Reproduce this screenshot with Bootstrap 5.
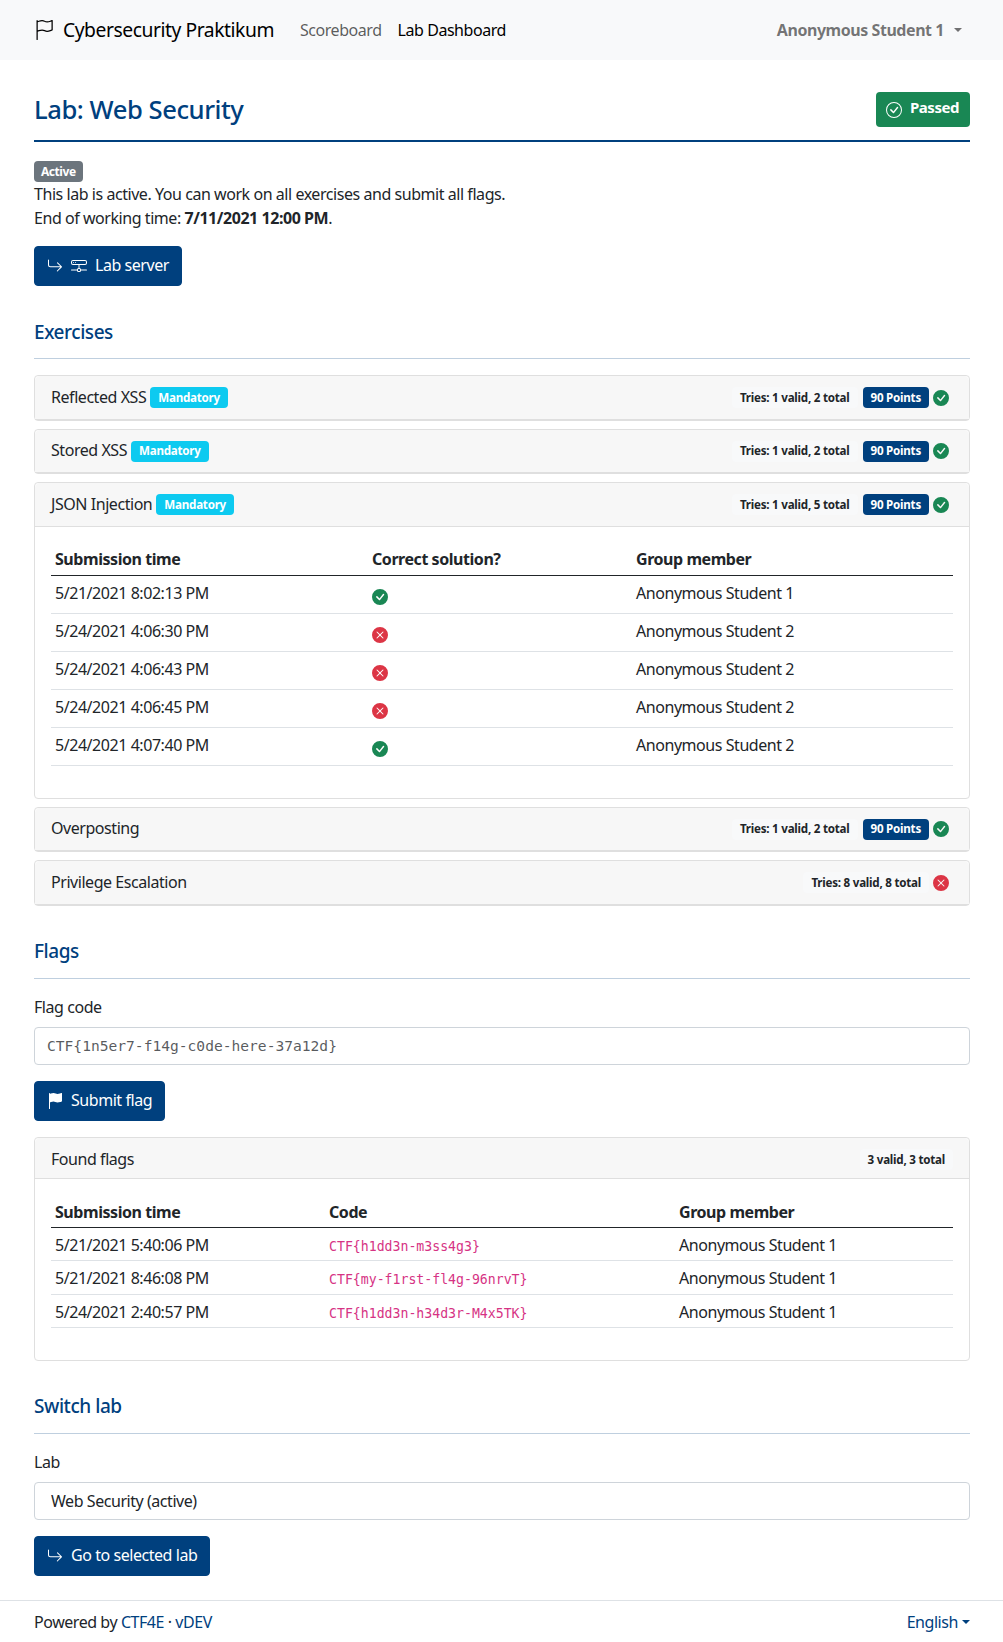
<!DOCTYPE html>
<html lang="en">
<head>
  <meta charset="UTF-8" />
  <title>Lab Dashboard</title>
  <link href="https://cdn.jsdelivr.net/npm/bootstrap@5.3.0/dist/css/bootstrap.min.css" rel="stylesheet"/>
  <style>
    body { font-family: "Noto Sans", sans-serif; color: #212529; letter-spacing: -.028em; }
    a { color: #00407e; text-decoration: none; }
    .ico { width: 1em; height: 1em; fill: currentColor; vertical-align: -.125em; flex: none; }
    .top-bar { height: 60px; padding: 0 33px 0 34px; }
    .top-bar .navbar-brand { font-size: 19.3px; margin-right: 18px; padding: 0; display: flex; align-items: center; gap: 9px; }
    .top-bar .navbar-brand .ico { width: 20px; height: 20px; }
    .top-bar .nav-link { padding: 8px; }
    .user-menu { font-weight: 700; color: rgba(0,0,0,.55); padding-right: 8px; }
    .user-menu::after { margin-left: 10px; }
    .page-wrap { padding: 0 33px 0 34px; }
    .lab-title { border-bottom: 2px solid #00407e; height: 82px; padding-top: 31px; display: flex; justify-content: space-between; align-items: flex-start; }
    .lab-title h1 { color: #00407e; font-size: 25.6px; margin: 0; line-height: 38px; }
    .passed-tag { background: #198754; color: #fff; font-weight: 700; font-size: 15px; border-radius: 4px; height: 35px; margin-top: 1px; padding: 0 11px 5px 10px; display: flex; align-items: center; gap: 8px; }
    .passed-tag .ico { font-size: 16px; margin-top: 5px; }
    .state-tag { font-size: 12px; height: 21px; padding: 0 7px; line-height: 21px; display: block; width: fit-content; margin-top: 19px; border-radius: 4px; }
    .dark-btn { --bs-btn-bg: #00407e; --bs-btn-border-color: #00407e; --bs-btn-hover-bg: #00407e; --bs-btn-hover-border-color: #00407e; --bs-btn-color: #fff; --bs-btn-hover-color: #fff; height: 40px; padding: 0 12px 2px; display: inline-flex; align-items: center; gap: 8px; letter-spacing: inherit; border-radius: 4px; }
    .dark-btn .ico { margin-top: 2px; }
    .sec-head { color: #00407e; font-size: 19px; line-height: 30px; margin: 30px 0 0; padding-bottom: 12px; border-bottom: 1px solid #bfcfdf; }
    .sec-first { margin-top: 31px; padding-bottom: 11px; }
    .ex-card { border-color: #dfdfdf; margin-bottom: 8px; border-radius: 4px; }
    .ex-card .card-header { background: #f7f7f7; padding: 0 16px 1px; height: 43.5px; display: flex; align-items: center; border-color: #dfdfdf; }
    .ex-card .found-head { height: 41.5px; padding-bottom: 0; padding-top: 2px; }
    .ex-body { padding-bottom: 16px; }
    .tag { font-size: 11.6px; line-height: 12px; padding: 4.5px 8px; border-radius: 4px; margin-left: 4px; margin-top: 2px; letter-spacing: -.02em; }
    .tag-blue { background: #0dcaf0; color: #fff; }
    .tag-dark { background: #00407e; color: #fff; margin-left: 5px; }
    .tag-tries { background: #f8f9fa; color: #212529; }
    .stat-ico { font-size: 16px; margin: 2px 4px 0; }
    .ok { color: #198754; }
    .bad { color: #dc3545; }
    .data-tbl { table-layout: fixed; }
    .data-tbl th, .data-tbl td { padding: 4px; border-color: #dee2e6; }
    .data-tbl td { padding-top: 5px; padding-bottom: 3px; vertical-align: top; }
    .data-tbl thead th { border-bottom: 1px solid #212529; padding-bottom: 4px; height: 32px; vertical-align: bottom; }
    .data-tbl.tight thead th { padding-bottom: 3px; }
    .data-tbl tbody tr { height: 38px; }
    .data-tbl.tight tbody tr { height: 33.5px; }
    .data-tbl td .ico { font-size: 16px; margin-top: 8px; display: block; }
    .c1 { width: 317px; }
    .c2 { width: 264px; }
    .d1 { width: 274px; }
    .d2 { width: 350px; }
    .mono-txt { font-family: "DejaVu Sans Mono", monospace; font-size: 13.2px; color: #d63384; letter-spacing: 0; }
    .field-lbl { margin: 16px 0 8px; display: block; }
    .flag-input { font-family: "DejaVu Sans Mono", monospace; font-size: 14.6px; letter-spacing: 0; height: 38px; border-radius: 4px; border-color: #ced4da; }
    .lab-select { height: 38px; border-radius: 4px; padding-left: 16px; background-image: none; letter-spacing: inherit; border-color: #ced4da; }
    .foot-bar { margin-top: 24px; border-top: 1px solid #dee2e6; padding: 9px 33px 0 34px; display: flex; justify-content: space-between; }
  </style>
</head>
<body>
  <svg width="0" height="0" class="position-absolute">
    <symbol id="i-flag" viewBox="0 0 16 16"><path d="M14.778.085A.5.5 0 0 1 15 .5V8a.5.5 0 0 1-.314.464L14.5 8l.186.464-.003.001-.006.003-.023.009a12.435 12.435 0 0 1-.397.15c-.264.095-.631.223-1.047.35-.816.252-1.879.523-2.71.523-.847 0-1.548-.28-2.158-.525l-.028-.01C7.68 8.71 7.14 8.5 6.5 8.5c-.7 0-1.638.23-2.437.477A19.626 19.626 0 0 0 3 9.342V15.5a.5.5 0 0 1-1 0V.5a.5.5 0 0 1 1 0v.282c.226-.079.496-.17.79-.26C4.606.272 5.67 0 6.5 0c.84 0 1.524.277 2.121.519l.043.018C9.286.788 9.828 1 10.5 1c.7 0 1.638-.23 2.437-.477a19.587 19.587 0 0 0 1.349-.476l.019-.007.004-.002h.001M14 1.221c-.22.078-.48.167-.766.255-.81.252-1.872.523-2.734.523-.886 0-1.592-.286-2.203-.534l-.008-.003C7.662 1.21 7.139 1 6.5 1c-.669 0-1.606.229-2.415.478A21.294 21.294 0 0 0 3 1.845v6.433c.22-.078.48-.167.766-.255C4.576 7.77 5.638 7.5 6.5 7.5c.847 0 1.548.28 2.158.525l.028.01C9.32 8.29 9.86 8.5 10.5 8.5c.668 0 1.606-.229 2.415-.478A21.317 21.317 0 0 0 14 7.655V1.222z"/></symbol>
    <symbol id="i-flag-fill" viewBox="0 0 16 16"><path d="M14.778.085A.5.5 0 0 1 15 .5V8a.5.5 0 0 1-.314.464L14.5 8l.186.464-.003.001-.006.003-.023.009a12.435 12.435 0 0 1-.397.15c-.264.095-.631.223-1.047.35-.816.252-1.879.523-2.71.523-.847 0-1.548-.28-2.158-.525l-.028-.01C7.68 8.71 7.14 8.5 6.5 8.5c-.7 0-1.638.23-2.437.477A19.626 19.626 0 0 0 3 9.342V15.5a.5.5 0 0 1-1 0V.5a.5.5 0 0 1 1 0v.282c.226-.079.496-.17.79-.26C4.606.272 5.67 0 6.5 0c.84 0 1.524.277 2.121.519l.043.018C9.286.788 9.828 1 10.5 1c.7 0 1.638-.23 2.437-.477a19.587 19.587 0 0 0 1.349-.476l.019-.007.004-.002h.001"/></symbol>
    <symbol id="i-check" viewBox="0 0 16 16"><path d="M8 15A7 7 0 1 1 8 1a7 7 0 0 1 0 14m0 1A8 8 0 1 0 8 0a8 8 0 0 0 0 16"/><path d="M10.97 4.97a.235.235 0 0 0-.02.022L7.477 9.417 5.384 7.323a.75.75 0 0 0-1.06 1.06L6.97 11.03a.75.75 0 0 0 1.079-.02l3.992-4.99a.75.75 0 0 0-1.071-1.05"/></symbol>
    <symbol id="i-ok" viewBox="0 0 16 16"><path d="M16 8A8 8 0 1 1 0 8a8 8 0 0 1 16 0m-3.97-3.03a.75.75 0 0 0-1.08.022L7.477 9.417 5.384 7.323a.75.75 0 0 0-1.06 1.06L6.97 11.03a.75.75 0 0 0 1.079-.02l3.992-4.99a.75.75 0 0 0-.01-1.05z"/></symbol>
    <symbol id="i-bad" viewBox="0 0 16 16"><path d="M16 8A8 8 0 1 1 0 8a8 8 0 0 1 16 0M5.354 4.646a.5.5 0 1 0-.708.708L7.293 8l-2.647 2.646a.5.5 0 0 0 .708.708L8 8.707l2.646 2.647a.5.5 0 0 0 .708-.708L8.707 8l2.647-2.646a.5.5 0 0 0-.708-.708L8 7.293z"/></symbol>
    <symbol id="i-return" viewBox="0 0 16 16"><path fill-rule="evenodd" d="M1.5 1.5A.5.5 0 0 0 1 2v4.8a2.5 2.5 0 0 0 2.5 2.5h9.793l-3.347 3.346a.5.5 0 0 0 .708.708l4.2-4.2a.5.5 0 0 0 0-.708l-4-4a.5.5 0 0 0-.708.708L13.293 8.3H3.5A1.5 1.5 0 0 1 2 6.8V2a.5.5 0 0 0-.5-.5"/></symbol>
    <symbol id="i-server" viewBox="0 0 16 16"><path d="M4.5 5a.5.5 0 1 0 0-1 .5.5 0 0 0 0 1zM3 4.5a.5.5 0 1 1-1 0 .5.5 0 0 1 1 0z"/><path d="M0 4a2 2 0 0 1 2-2h12a2 2 0 0 1 2 2v1a2 2 0 0 1-2 2H8.5v3a1.5 1.5 0 0 1 1.5 1.5h5.5a.5.5 0 0 1 0 1H10A1.5 1.5 0 0 1 8.5 14h-1A1.5 1.5 0 0 1 6 12.5H.5a.5.5 0 0 1 0-1H6A1.5 1.5 0 0 1 7.5 10V7H2a2 2 0 0 1-2-2V4zm1 0v1a1 1 0 0 0 1 1h12a1 1 0 0 0 1-1V4a1 1 0 0 0-1-1H2a1 1 0 0 0-1 1zm6 7.5v1a.5.5 0 0 0 .5.5h1a.5.5 0 0 0 .5-.5v-1a.5.5 0 0 0-.5-.5h-1a.5.5 0 0 0-.5.5z"/></symbol>
  </svg>

  <nav class="navbar navbar-expand navbar-light bg-light top-bar">
    <a class="navbar-brand" href="#"><svg class="ico"><use href="#i-flag"/></svg>Cybersecurity Praktikum</a>
    <ul class="navbar-nav me-auto">
      <li class="nav-item"><a class="nav-link" href="#">Scoreboard</a></li>
      <li class="nav-item"><a class="nav-link active" href="#">Lab Dashboard</a></li>
    </ul>
    <a class="nav-link dropdown-toggle user-menu" href="#">Anonymous Student 1</a>
  </nav>

  <main class="page-wrap">
    <div class="lab-title">
      <h1>Lab: Web Security</h1>
      <div class="passed-tag"><svg class="ico"><use href="#i-check"/></svg>Passed</div>
    </div>

    <span class="badge bg-secondary state-tag">Active</span>
    <div>This lab is active. You can work on all exercises and submit all flags.</div>
    <div>End of working time: <strong>7/11/2021 12:00 PM</strong>.</div>
    <a href="#" class="btn dark-btn mt-3"><svg class="ico"><use href="#i-return"/></svg><svg class="ico"><use href="#i-server"/></svg>Lab server</a>

    <h2 class="sec-head sec-first">Exercises</h2>

    <div class="card ex-card mt-3">
      <div class="card-header">Reflected XSS <span class="badge tag tag-blue">Mandatory</span>
        <span class="ms-auto badge tag tag-tries">Tries: 1 valid, 2 total</span><span class="badge tag tag-dark">90 Points</span><svg class="ico stat-ico ok"><use href="#i-ok"/></svg></div>
    </div>
    <div class="card ex-card">
      <div class="card-header">Stored XSS <span class="badge tag tag-blue">Mandatory</span>
        <span class="ms-auto badge tag tag-tries">Tries: 1 valid, 2 total</span><span class="badge tag tag-dark">90 Points</span><svg class="ico stat-ico ok"><use href="#i-ok"/></svg></div>
    </div>
    <div class="card ex-card">
      <div class="card-header">JSON Injection <span class="badge tag tag-blue">Mandatory</span>
        <span class="ms-auto badge tag tag-tries">Tries: 1 valid, 5 total</span><span class="badge tag tag-dark">90 Points</span><svg class="ico stat-ico ok"><use href="#i-ok"/></svg></div>
      <div class="card-body ex-body">
        <table class="table data-tbl">
          <colgroup><col class="c1"><col class="c2"><col></colgroup>
          <thead><tr><th>Submission time</th><th>Correct solution?</th><th>Group member</th></tr></thead>
          <tbody>
            <tr><td>5/21/2021 8:02:13 PM</td><td><svg class="ico ok"><use href="#i-ok"/></svg></td><td>Anonymous Student 1</td></tr>
            <tr><td>5/24/2021 4:06:30 PM</td><td><svg class="ico bad"><use href="#i-bad"/></svg></td><td>Anonymous Student 2</td></tr>
            <tr><td>5/24/2021 4:06:43 PM</td><td><svg class="ico bad"><use href="#i-bad"/></svg></td><td>Anonymous Student 2</td></tr>
            <tr><td>5/24/2021 4:06:45 PM</td><td><svg class="ico bad"><use href="#i-bad"/></svg></td><td>Anonymous Student 2</td></tr>
            <tr><td>5/24/2021 4:07:40 PM</td><td><svg class="ico ok"><use href="#i-ok"/></svg></td><td>Anonymous Student 2</td></tr>
          </tbody>
        </table>
      </div>
    </div>
    <div class="card ex-card">
      <div class="card-header">Overposting
        <span class="ms-auto badge tag tag-tries">Tries: 1 valid, 2 total</span><span class="badge tag tag-dark">90 Points</span><svg class="ico stat-ico ok"><use href="#i-ok"/></svg></div>
    </div>
    <div class="card ex-card">
      <div class="card-header">Privilege Escalation
        <span class="ms-auto badge tag tag-tries">Tries: 8 valid, 8 total</span><svg class="ico stat-ico bad"><use href="#i-bad"/></svg></div>
    </div>

    <h2 class="sec-head">Flags</h2>
    <label class="field-lbl" for="flagCode">Flag code</label>
    <input id="flagCode" class="form-control flag-input" placeholder="CTF{1n5er7-f14g-c0de-here-37a12d}">
    <a href="#" class="btn dark-btn mt-3"><svg class="ico"><use href="#i-flag-fill"/></svg>Submit flag</a>

    <div class="card ex-card mt-3">
      <div class="card-header found-head">Found flags<span class="ms-auto badge tag tag-tries">3 valid, 3 total</span></div>
      <div class="card-body ex-body">
        <table class="table data-tbl tight">
          <colgroup><col class="d1"><col class="d2"><col></colgroup>
          <thead><tr><th>Submission time</th><th>Code</th><th>Group member</th></tr></thead>
          <tbody>
            <tr><td>5/21/2021 5:40:06 PM</td><td><code class="mono-txt">CTF{h1dd3n-m3ss4g3}</code></td><td>Anonymous Student 1</td></tr>
            <tr><td>5/21/2021 8:46:08 PM</td><td><code class="mono-txt">CTF{my-f1rst-fl4g-96nrvT}</code></td><td>Anonymous Student 1</td></tr>
            <tr><td>5/24/2021 2:40:57 PM</td><td><code class="mono-txt">CTF{h1dd3n-h34d3r-M4x5TK}</code></td><td>Anonymous Student 1</td></tr>
          </tbody>
        </table>
      </div>
    </div>

    <h2 class="sec-head">Switch lab</h2>
    <label class="field-lbl" for="labSel">Lab</label>
    <select id="labSel" class="form-select lab-select"><option>Web Security (active)</option></select>
    <a href="#" class="btn dark-btn mt-3"><svg class="ico"><use href="#i-return"/></svg>Go to selected lab</a>
  </main>

  <footer class="foot-bar">
    <div>Powered by <a href="#">CTF4E</a> · <a href="#">vDEV</a></div>
    <a href="#" class="dropdown-toggle">English</a>
  </footer>
  <script src="https://cdn.jsdelivr.net/npm/bootstrap@5.3.0/dist/js/bootstrap.bundle.min.js"></script>
</body>
</html>
